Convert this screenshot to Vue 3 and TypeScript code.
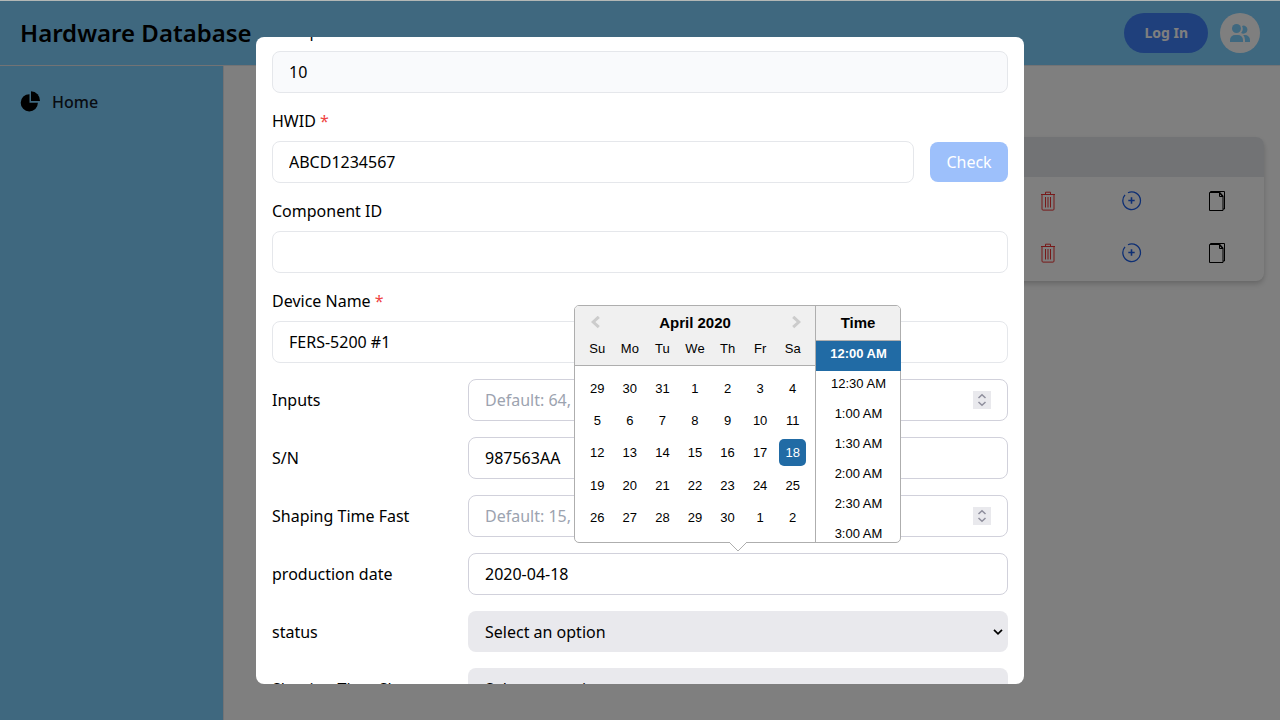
<script setup lang="ts">
import { onMounted, ref } from 'vue'

interface Field {
  id: string
  label: string
  kind: 'text' | 'number' | 'date' | 'select'
  value?: string
  placeholder?: string
}

const fields: Field[] = [
  { id: 'inputs', label: 'Inputs', kind: 'number', placeholder: 'Default: 64,' },
  { id: 'sn', label: 'S/N', kind: 'text', value: '987563AA' },
  { id: 'fast', label: 'Shaping Time Fast', kind: 'number', placeholder: 'Default: 15,' },
  { id: 'date', label: 'production date', kind: 'date', value: '2020-04-18' },
  { id: 'status', label: 'status', kind: 'select' },
  { id: 'slow', label: 'Shaping Time Slow', kind: 'select' },
]

const weekdays = ['Su', 'Mo', 'Tu', 'We', 'Th', 'Fr', 'Sa']
const days: number[] = [
  29, 30, 31,
  ...Array.from({ length: 30 }, (_, i) => i + 1),
  1, 2,
]
const selectedDay = 18
const times = ['12:00 AM', '12:30 AM', '1:00 AM', '1:30 AM', '2:00 AM', '2:30 AM', '3:00 AM']
const selectedTime = '12:00 AM'

const dialog = ref<HTMLElement | null>(null)
onMounted(() => {
  if (dialog.value) dialog.value.scrollTop = 34
})
</script>

<template>
  <div class="page">
    <header class="topbar">
      <h1>Hardware Database</h1>
      <div class="account">
        <button type="button" class="login">Log In</button>
        <button type="button" class="avatar" aria-label="Users">
          <svg viewBox="0 0 20 18" width="20" height="18" fill="currentColor">
            <circle cx="6.500" cy="4.500" r="4.500" />
            <path d="M0 18v-2a5 5 0 0 1 5-5h3a5 5 0 0 1 5 5v2z" />
            <path d="M12 1.900a4 4 0 1 1-.9 7A6.300 6.300 0 0 0 12 1.900z" />
            <path d="M13.200 11H15a5 5 0 0 1 5 5v2h-5v-2a7 7 0 0 0-1.800-5z" />
          </svg>
        </button>
      </div>
    </header>

    <div class="body">
      <nav class="sidebar">
        <a href="#" class="nav-link">
          <svg viewBox="0 0 20 20" width="20" height="20" fill="currentColor">
            <path d="M9.500 2.200V10.800h8.400A8.600 8.600 0 1 1 9.500 2.200z" />
            <path d="M11 -.8A9.300 9.300 0 0 1 20 9H11z" />
          </svg>
          <span>Home</span>
        </a>
      </nav>
      <main class="content">
        <table class="devices">
          <thead>
            <tr><th></th><th class="c-del"></th><th class="c-add"></th><th class="c-copy"></th></tr>
          </thead>
          <tbody>
            <tr v-for="n in 2" :key="n">
              <td></td>
              <td>
                <button type="button" class="icon red" aria-label="Delete">
                  <svg viewBox="0 0 20 20" width="20" height="20" fill="none" stroke="currentColor">
                    <path d="M3 3.500h14M7.500 3V1.200h5V3M4 3.500v14.600q0 1 1 1h10q1 0 1-1V3.500M7.500 6v10.500M10 6v10.500M12.500 6v10.500" />
                  </svg>
                </button>
              </td>
              <td>
                <button type="button" class="icon blue" aria-label="Add">
                  <svg viewBox="0 0 20 20" width="20" height="20" fill="none" stroke="currentColor">
                    <path stroke-width="1.300" d="M4.900 2.300A8.800 8.800 0 1 1 2.300 4.900" transform="rotate(8 9.500 9.500)" />
                    <path stroke-width="1.600" d="M9.500 6.300v6.400M6.300 9.500h6.400" />
                  </svg>
                </button>
              </td>
              <td>
                <button type="button" class="icon" aria-label="Copy">
                  <svg viewBox="0 0 20 20" width="20" height="20" fill="none" stroke="currentColor">
                    <path d="M2.500 1.500h10l3.500 4v14H2.500zM12.500 1.500v4H16M3.500 1.500V.5h14v17.500H16" />
                    <path d="M12.500 1.500l3.500 4" stroke-width="1.500" />
                  </svg>
                </button>
              </td>
            </tr>
          </tbody>
        </table>
      </main>
    </div>

    <div class="backdrop">
      <section ref="dialog" class="dialog" role="dialog" aria-modal="true" aria-label="Edit device">
        <div class="stack">
          <label for="group">Group ID</label>
          <input id="group" class="box readonly" type="text" value="10" readonly />
        </div>
        <div class="stack">
          <label for="hwid">HWID <span class="req">*</span></label>
          <div class="with-button">
            <input id="hwid" class="box" type="text" value="ABCD1234567" />
            <button type="button" class="check">Check</button>
          </div>
        </div>
        <div class="stack">
          <label for="component">Component ID</label>
          <input id="component" class="box" type="text" />
        </div>
        <div class="stack">
          <label for="device">Device Name <span class="req">*</span></label>
          <input id="device" class="box" type="text" value="FERS-5200 #1" />
        </div>

        <div v-for="f in fields" :key="f.id" class="row" :class="f.kind">
          <label :for="f.id">{{ f.label }}</label>
          <div class="control">
            <template v-if="f.kind === 'select'">
              <select :id="f.id" class="options"><option>Select an option</option></select>
              <svg class="caret" viewBox="0 0 10 6" width="10" height="6" fill="none" stroke="currentColor" stroke-width="1.700">
                <path d="M1 .8l4 4 4-4" />
              </svg>
            </template>
            <template v-else>
              <input :id="f.id" class="box strong" :type="f.kind === 'number' ? 'number' : 'text'" :value="f.value" :placeholder="f.placeholder" />
              <span v-if="f.kind === 'number'" class="spin" aria-hidden="true">
                <svg viewBox="0 0 18 18" width="18" height="18" fill="none" stroke="currentColor" stroke-width="1.500">
                  <path d="M5.500 7L9 3.700 12.500 7M5.500 11L9 14.300 12.500 11" />
                </svg>
              </span>
            </template>

            <div v-if="f.kind === 'date'" class="picker">
              <div class="month">
                <div class="month-head">
                  <div class="month-nav">
                    <button type="button" aria-label="Previous month">
                      <svg viewBox="0 0 12 14" width="12" height="14" fill="none" stroke="#ccc" stroke-width="3">
                        <path d="M9.800 .8L4.200 6l5.600 5.200" />
                      </svg>
                    </button>
                    <h2>April 2020</h2>
                    <button type="button" aria-label="Next month">
                      <svg viewBox="0 0 12 14" width="12" height="14" fill="none" stroke="#ccc" stroke-width="3">
                        <path d="M4.200 .8L9.800 6l-5.600 5.200" />
                      </svg>
                    </button>
                  </div>
                  <div class="week">
                    <span v-for="w in weekdays" :key="w">{{ w }}</span>
                  </div>
                </div>
                <div class="days">
                  <button v-for="(d, i) in days" :key="i" type="button" class="day" :class="{ selected: d === selectedDay }">{{ d }}</button>
                </div>
              </div>
              <div class="time">
                <h2>Time</h2>
                <ul>
                  <li v-for="t in times" :key="t" :class="{ selected: t === selectedTime }">{{ t }}</li>
                </ul>
              </div>
              <svg class="pointer" viewBox="0 0 20 10" width="20" height="10">
                <path d="M1 0l9 9 9-9" fill="#fff" stroke="#aeaeae" />
              </svg>
            </div>
          </div>
        </div>
      </section>
    </div>
  </div>
</template>

<style>
html,
body,
#app {
  height: 100%;
}
body {
  margin: 0;
  overflow: hidden;
}
</style>

<style scoped>
* {
  box-sizing: border-box;
}
.page {
  height: 100vh;
  display: flex;
  flex-direction: column;
  border-top: 1px solid #b3b7b5;
  background: #fff;
  color: #000;
  font: 16px/24px "Noto Sans", sans-serif;
}
button,
input,
select {
  font: inherit;
  color: inherit;
  margin: 0;
}
button {
  border: 0;
  padding: 0;
  background: none;
}
h1,
h2,
ul {
  margin: 0;
  padding: 0;
}
.topbar {
  display: flex;
  align-items: center;
  justify-content: space-between;
  padding: 12px 20px;
  background: #7fd0fe;
  border-bottom: 1px solid #e5e7eb;
}
.topbar h1 {
  font-size: 24px;
  line-height: 32px;
  font-weight: 600;
}
.account {
  display: flex;
  gap: 12px;
}
.login {
  height: 40px;
  padding: 0 20px;
  border-radius: 20px;
  background: #3f80f8;
  color: #fff;
  font-size: 14px;
  font-weight: 700;
}
.avatar {
  width: 40px;
  height: 40px;
  display: grid;
  place-items: center;
  border-radius: 50%;
  background: #fff;
  color: #7fd0fe;
}
.body {
  flex: 1;
  display: flex;
}
.sidebar {
  width: 224px;
  padding: 16px 12px;
  background: #7fd0fe;
  border-right: 1px solid #e5e7eb;
}
.nav-link {
  display: flex;
  align-items: center;
  gap: 12px;
  padding: 8px;
  font-weight: 500;
  color: #111827;
  text-decoration: none;
}
.nav-link svg {
  color: #000;
  overflow: visible;
}
.content {
  flex: 1;
  padding: 71px 16px 16px 64px;
}
.devices {
  width: 100%;
  table-layout: fixed;
  border-collapse: collapse;
  border-radius: 8px;
  overflow: hidden;
  box-shadow: 0 4px 6px rgba(0, 0, 0, 0.1), 0 2px 4px rgba(0, 0, 0, 0.1);
}
.devices th {
  height: 40px;
  padding: 0;
  background: #e5e7eb;
}
.devices td {
  height: 52px;
  padding: 2px 0 0;
  text-align: center;
}
.c-del {
  width: 90px;
}
.c-add {
  width: 77px;
}
.c-copy {
  width: 94px;
}
.icon svg {
  display: block;
}
.red {
  color: #ef3333;
}
.blue {
  color: #1d5fe8;
}
.backdrop {
  position: fixed;
  inset: 1px 0 0;
  display: flex;
  align-items: center;
  justify-content: center;
  background: rgba(0, 0, 0, 0.5);
}
.dialog {
  width: 60%;
  height: 90%;
  padding: 16px;
  display: flex;
  flex-direction: column;
  gap: 16px;
  overflow-y: auto;
  scrollbar-width: none;
  border-radius: 8px;
  background: #fff;
}
.stack {
  display: flex;
  flex-direction: column;
  gap: 8px;
}
.with-button {
  display: flex;
  align-items: center;
  gap: 16px;
}
.box {
  width: 100%;
  min-width: 0;
  height: 42px;
  padding: 8px 16px;
  border: 1px solid #e5e7eb;
  border-radius: 8px;
  background: #fff;
  outline: 0;
  appearance: textfield;
}
.box::placeholder {
  color: #9ca3af;
  opacity: 1;
}
.box::-webkit-inner-spin-button {
  appearance: none;
}
.strong {
  border-color: #d1d1db;
}
.readonly {
  background: #f9fafc;
}
.check {
  min-width: 78px;
  height: 40px;
  padding: 0 16px;
  border-radius: 8px;
  background: #9dc0fb;
  color: #fff;
}
.req {
  color: #ef4444;
}
.row {
  display: grid;
  grid-template-columns: 1fr 3fr;
  align-items: center;
  gap: 16px;
}
.row.select label {
  padding-top: 1px;
}
.control {
  position: relative;
  display: flex;
}
.options {
  width: 100%;
  height: 41px;
  padding: 1px 17px 0;
  border: 0;
  border-radius: 8px;
  background: #e9e9ed;
  appearance: none;
}
.caret {
  position: absolute;
  right: 5px;
  top: 18px;
  pointer-events: none;
}
.spin {
  position: absolute;
  right: 17px;
  top: 12px;
  width: 18px;
  height: 18px;
  background: #e9e9ed;
  color: #8f8f9d;
}
.spin svg {
  display: block;
}
.picker {
  position: absolute;
  z-index: 1;
  left: calc(50% - 164px);
  bottom: calc(100% + 10px);
  width: 327px;
  display: flex;
  border: 1px solid #aeaeae;
  border-radius: 5px;
  background: #fff;
  font: 13px/15px "Liberation Sans", Arial, sans-serif;
}
.picker h2 {
  font-size: 15px;
  line-height: 17px;
  font-weight: 700;
  text-align: center;
}
.month {
  width: 240px;
}
.month-head {
  height: 60px;
  background: #f0f0f0;
  border-bottom: 1px solid #aeaeae;
  border-top-left-radius: 4px;
}
.month-nav {
  height: 34px;
  display: grid;
  grid-template-columns: 40px 1fr 40px;
  align-items: center;
}
.month-nav button {
  display: grid;
  place-items: center;
}
.week,
.days {
  display: grid;
  grid-template-columns: repeat(7, 1fr);
  padding: 0 6px;
  text-align: center;
}
.week {
  line-height: 18px;
}
.days {
  height: 176px;
  padding: 6px 6px 8px;
  place-items: center;
}
.day {
  width: 27px;
  height: 27px;
  border-radius: 5px;
  text-align: center;
}
.selected {
  background: #216ba5;
  color: #fff;
}
.time {
  flex: 1;
  border-left: 1px solid #aeaeae;
}
.time h2 {
  height: 35px;
  padding-top: 8px;
  background: #f0f0f0;
  border-bottom: 1px solid #aeaeae;
  border-top-right-radius: 4px;
}
.time ul {
  height: 201px;
  margin-right: -1px;
  overflow: hidden;
  list-style: none;
}
.time li {
  height: 30px;
  padding: 5px 0;
  text-align: center;
}
.time .selected {
  font-weight: 700;
}
.pointer {
  position: absolute;
  left: 153px;
  top: 100%;
}
</style>
